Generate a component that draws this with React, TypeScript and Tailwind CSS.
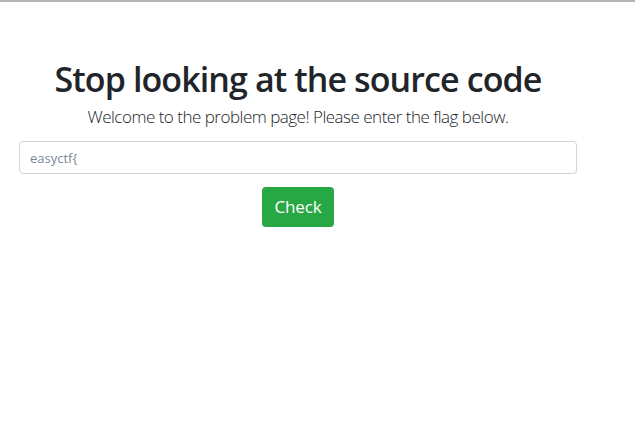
import React from "react";

export default function App() {
  return (
    <div className="min-h-[423px] w-full bg-white border-t-2 border-[#b4b4b4] font-['Open_Sans',sans-serif] text-[#212529]">
      <div className="w-[596px] px-[19px] pt-[55px] flex flex-col items-center">
        <h1 className="text-[34px] leading-[44px] font-semibold tracking-[-0.9px]">
          Stop looking at the source code
        </h1>
        <p className="mt-[3px] text-[17px] leading-[26px] font-light tracking-[-0.5px]">
          Welcome to the problem page! Please enter the flag below.
        </p>
        <input
          type="text"
          placeholder="easyctf{"
          className="mt-[11px] w-full h-[33px] px-[10px] text-[13px] border border-[#ced4da] rounded-[4px] placeholder:text-[#7d8794] outline-none"
        />
        <button className="mt-[13px] h-[40px] px-[13px] rounded-[4px] bg-[#28a745] text-white text-[17px] tracking-[-0.2px]">
          Check
        </button>
      </div>
    </div>
  );
}
